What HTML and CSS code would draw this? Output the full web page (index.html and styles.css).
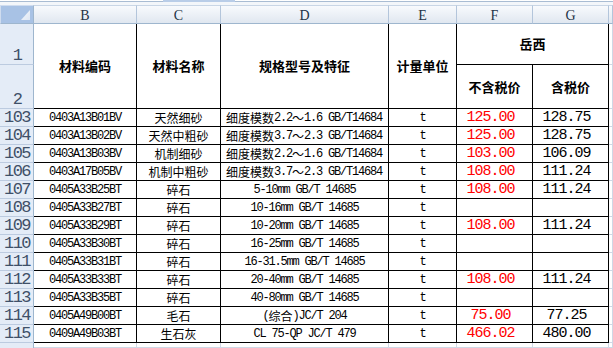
FILE: index.html
```html
<!DOCTYPE html>
<html lang="zh">
<head>
<meta charset="utf-8">
<title>材料价格表</title>
<link rel="stylesheet" href="styles.css">
</head>
<body>
<div class="topbar"><div class="tab"></div></div>
<div class="sheet">
  <div class="corner"><svg width="9" height="10" viewBox="0 0 9 10"><defs><linearGradient id="tg" x1="0" y1="0" x2="1" y2="1"><stop offset="0" stop-color="#f4f7fb"/><stop offset="1" stop-color="#dfe7f3"/></linearGradient></defs><polygon points="9,0 9,10 0,10" fill="url(#tg)"/></svg></div>
  <div class="ch">B</div>
  <div class="ch">C</div>
  <div class="ch">D</div>
  <div class="ch">E</div>
  <div class="ch">F</div>
  <div class="ch">G</div>
  <div class="ch"></div>

  <div class="rh">1</div>
  <div class="c hd span2">材料编码</div>
  <div class="c hd span2">材料名称</div>
  <div class="c hd span2">规格型号及特征</div>
  <div class="c hd span2">计量单位</div>
  <div class="c hd cspan2">岳西</div>
  <div class="x"></div>
  <div class="rh">2</div>
  <div class="c hd">不含税价</div>
  <div class="c hd">含税价</div>
  <div class="x"></div>

  <div class="rh">103</div>
  <div class="c">0403A13B01BV</div>
  <div class="c name">天然细砂</div>
  <div class="c left"><span class="cjk">细度模数</span>2.2<span class="cjk">～</span>1.6 GB/T14684</div>
  <div class="c">t</div>
  <div class="c price red">125.00</div>
  <div class="c price">128.75</div>
  <div class="x"></div>

  <div class="rh">104</div>
  <div class="c">0403A13B02BV</div>
  <div class="c name">天然中粗砂</div>
  <div class="c left"><span class="cjk">细度模数</span>3.7<span class="cjk">～</span>2.3 GB/T14684</div>
  <div class="c">t</div>
  <div class="c price red">125.00</div>
  <div class="c price">128.75</div>
  <div class="x"></div>

  <div class="rh">105</div>
  <div class="c">0403A13B03BV</div>
  <div class="c name">机制细砂</div>
  <div class="c left"><span class="cjk">细度模数</span>2.2<span class="cjk">～</span>1.6 GB/T14684</div>
  <div class="c">t</div>
  <div class="c price red">103.00</div>
  <div class="c price">106.09</div>
  <div class="x"></div>

  <div class="rh">106</div>
  <div class="c">0403A17B05BV</div>
  <div class="c name">机制中粗砂</div>
  <div class="c left"><span class="cjk">细度模数</span>3.7<span class="cjk">～</span>2.3 GB/T14684</div>
  <div class="c">t</div>
  <div class="c price red">108.00</div>
  <div class="c price">111.24</div>
  <div class="x"></div>

  <div class="rh">107</div>
  <div class="c">0405A33B25BT</div>
  <div class="c name">碎石</div>
  <div class="c">5-10mm GB/T 14685</div>
  <div class="c">t</div>
  <div class="c price red">108.00</div>
  <div class="c price">111.24</div>
  <div class="x"></div>

  <div class="rh">108</div>
  <div class="c">0405A33B27BT</div>
  <div class="c name">碎石</div>
  <div class="c">10-16mm GB/T 14685</div>
  <div class="c">t</div>
  <div class="c price red"></div>
  <div class="c price"></div>
  <div class="x"></div>

  <div class="rh">109</div>
  <div class="c">0405A33B29BT</div>
  <div class="c name">碎石</div>
  <div class="c">10-20mm GB/T 14685</div>
  <div class="c">t</div>
  <div class="c price red">108.00</div>
  <div class="c price">111.24</div>
  <div class="x"></div>

  <div class="rh">110</div>
  <div class="c">0405A33B30BT</div>
  <div class="c name">碎石</div>
  <div class="c">16-25mm GB/T 14685</div>
  <div class="c">t</div>
  <div class="c price red"></div>
  <div class="c price"></div>
  <div class="x"></div>

  <div class="rh">111</div>
  <div class="c">0405A33B31BT</div>
  <div class="c name">碎石</div>
  <div class="c">16-31.5mm GB/T 14685</div>
  <div class="c">t</div>
  <div class="c price red"></div>
  <div class="c price"></div>
  <div class="x"></div>

  <div class="rh">112</div>
  <div class="c">0405A33B33BT</div>
  <div class="c name">碎石</div>
  <div class="c">20-40mm GB/T 14685</div>
  <div class="c">t</div>
  <div class="c price red">108.00</div>
  <div class="c price">111.24</div>
  <div class="x"></div>

  <div class="rh">113</div>
  <div class="c">0405A33B35BT</div>
  <div class="c name">碎石</div>
  <div class="c">40-80mm GB/T 14685</div>
  <div class="c">t</div>
  <div class="c price red"></div>
  <div class="c price"></div>
  <div class="x"></div>

  <div class="rh">114</div>
  <div class="c">0405A49B00BT</div>
  <div class="c name">毛石</div>
  <div class="c">(<span class="cjk">综合</span>)JC/T 204</div>
  <div class="c">t</div>
  <div class="c price red">75.00</div>
  <div class="c price">77.25</div>
  <div class="x"></div>

  <div class="rh">115</div>
  <div class="c">0409A49B03BT</div>
  <div class="c name">生石灰</div>
  <div class="c">CL 75-QP JC/T 479</div>
  <div class="c">t</div>
  <div class="c price red">466.02</div>
  <div class="c price">480.00</div>
  <div class="x"></div>

  <div class="rh rh-blank"></div>
  <div class="x"></div>
  <div class="x"></div>
  <div class="x"></div>
  <div class="x"></div>
  <div class="x"></div>
  <div class="x"></div>
  <div class="x"></div>
</div>
</body>
</html>
```

FILE: styles.css
```css
html, body {
  margin: 0;
  padding: 0;
}

body {
  width: 613px;
  height: 348px;
  overflow: hidden;
  background: #ffffff;
}

.topbar {
  display: flex;
  height: 5px;
  background: linear-gradient(#ffffff 0 1px, #a9bcd3 1px 2px, #f3f6fa 2px 100%);
}

.tab {
  margin-left: 163px;
  width: 72px;
  height: 2px;
  background: #b9cde8;
}

.sheet {
  display: grid;
  grid-template-columns: 34px 103px 84px 168px 68px 76px 76px 1fr;
  grid-template-rows: 19px 41px 44px repeat(13, 18px) 1fr;
  height: 343px;
}

.sheet > div {
  box-sizing: border-box;
  display: flex;
  align-items: center;
  justify-content: center;
  overflow: hidden;
  white-space: nowrap;
}

.corner {
  background: #a8c2e5;
  border: 1px solid #cfdcef;
  border-right-color: #9eb6ce;
  border-bottom-color: #9eb6ce;
  justify-content: flex-end !important;
  align-items: flex-end !important;
  padding: 0 3px 3px 0;
}

.corner svg {
  display: block;
}

.ch {
  background: linear-gradient(#f8fafd, #e0e7f0);
  border-top: 1px solid #c9d6e6;
  border-right: 1px solid #b3c5db;
  border-bottom: 1px solid #9eb6ce;
  font: 14px/14px "Liberation Serif", serif;
  color: #1e3346;
  padding-top: 2px;
}

.rh {
  background: #e4ecf7;
  border-right: 1px solid #9eb6ce;
  border-bottom: 1px solid #bccbe0;
  font: 17px/16px "Liberation Mono", monospace;
  letter-spacing: -1.5px;
  color: #3f5068;
  align-items: flex-end !important;
  padding-left: 1px;
}

.c {
  background: #ffffff;
  border-right: 1px solid #000000;
  border-bottom: 1px solid #000000;
  font: 12px/14px "Liberation Mono", "Noto Sans CJK SC", monospace;
  letter-spacing: -1.2px;
  color: #000000;
}

.cjk {
  font-family: "Noto Sans CJK SC", sans-serif;
  letter-spacing: 0;
}

.name {
  font-family: "Noto Sans CJK SC", sans-serif;
  letter-spacing: 0;
}

.hd {
  font: bold 13px/16px "Noto Sans CJK SC", sans-serif;
  letter-spacing: 0;
}

.span2 {
  grid-row: span 2;
}

.cspan2 {
  grid-column: span 2;
}

.left {
  justify-content: flex-start !important;
  padding-left: 5px;
}

.price {
  font-size: 15px;
  letter-spacing: -1px;
  padding-right: 8px;
}

.red {
  color: #ff0000;
}

.x {
  background: #ffffff;
  border-right: 1px solid #d0d7e5;
  border-bottom: 1px solid #d0d7e5;
}

.rh-blank {
  border-bottom: none;
}
```
